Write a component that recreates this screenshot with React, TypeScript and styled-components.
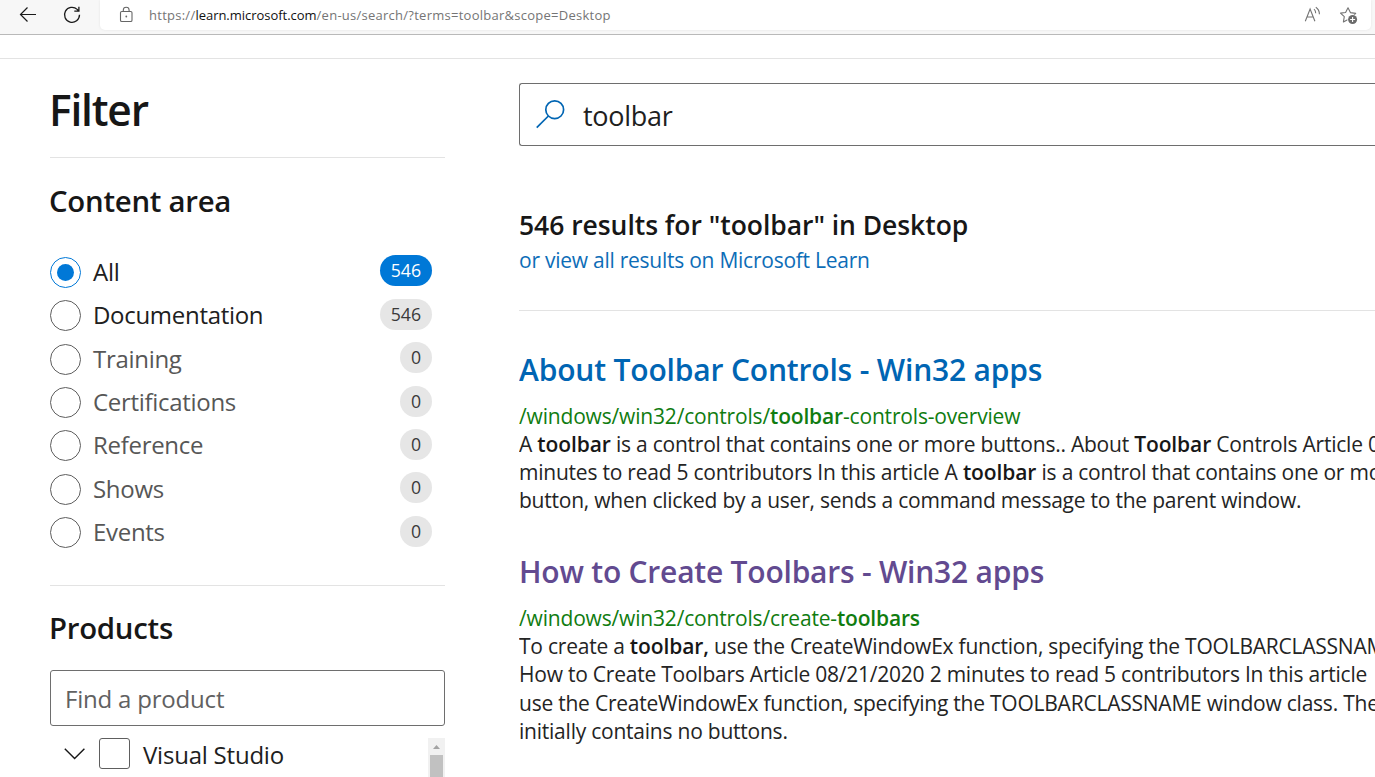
import React from 'react';
import styled, { createGlobalStyle } from 'styled-components';

const GlobalStyle = createGlobalStyle`
  * { box-sizing: border-box; }
  body {
    margin: 0;
    background: #fff;
    color: #171717;
    font-family: "Open Sans", "Noto Sans", sans-serif;
    overflow: hidden;
  }
  h1, h2, h3, p { margin: 0; }
`;

const Page = styled.div`
  width: 100vw;
  height: 100vh;
  display: flex;
  flex-direction: column;
  overflow: hidden;
`;

const BrowserBar = styled.header`
  flex: none;
  display: flex;
  align-items: flex-start;
  height: 35px;
  padding-right: 4px;
  background: #f7f7f7;
  border-bottom: 1px solid #b9b9b9;
`;

const NavButtons = styled.div`
  display: flex;
  width: 100px;
  padding: 4px 0 0 16px;
  gap: 20px;
  color: #1a1a1a;
  svg { display: block; }
`;

const AddressBar = styled.div`
  flex: 1;
  height: 30px;
  display: flex;
  align-items: center;
  padding: 0 12px 0 17px;
  background: #fff;
  border-radius: 0 0 5px 5px;
  box-shadow: 0 0 3px rgba(0, 0, 0, 0.08);
  color: #6b6b6b;
`;

const Url = styled.div`
  flex: 1;
  margin-left: 14px;
  font-size: 13px;
  line-height: 30px;
  letter-spacing: 0.26px;
  white-space: nowrap;
  color: #757575;
`;

const Host = styled.span`
  letter-spacing: -0.03px;
  color: #111;
`;

const AddressActions = styled.div`
  display: flex;
  gap: 16px;
  svg { display: block; }
`;

const SiteStrip = styled.div`
  flex: none;
  height: 24px;
  border-bottom: 1px solid #e3e3e3;
`;

const Content = styled.div`
  flex: 1;
  min-height: 0;
  display: flex;
  gap: 74px;
  padding-left: 50px;
  overflow: hidden;
`;

const Sidebar = styled.aside`
  flex: none;
  width: 395px;
  display: flex;
  flex-direction: column;
`;

const FilterTitle = styled.h1`
  height: 98px;
  margin-left: -1px;
  padding-top: 21px;
  font-size: 42.5px;
  font-weight: 600;
  line-height: 60px;
  letter-spacing: -1.2px;
`;

const Section = styled.section`
  border-top: 1px solid #e3e3e3;
`;

const SectionTitle = styled.h2<{ $raised?: boolean }>`
  height: 63px;
  margin-left: -1px;
  padding-top: ${(p) => (p.$raised ? 22 : 23)}px;
  font-size: 29.4px;
  font-weight: 600;
  line-height: 40px;
  letter-spacing: -0.28px;
`;

const Options = styled.ul`
  list-style: none;
  margin: 0;
  padding: 30px 13px 31px 0;
`;

const Option = styled.li<{ $muted?: boolean }>`
  display: flex;
  align-items: center;
  height: 43.35px;
  color: ${(p) => (p.$muted ? '#575757' : '#202020')};
`;

const Radio = styled.span<{ $checked?: boolean }>`
  flex: none;
  display: grid;
  place-items: center;
  width: 31px;
  height: 31px;
  margin: 0.5px 12px 0 0;
  border: 1px solid ${(p) => (p.$checked ? '#0078d7' : '#5e5e5e')};
  border-radius: 50%;
  &::after {
    content: '';
    width: 17px;
    height: 17px;
    border-radius: 50%;
    background: ${(p) => (p.$checked ? '#0078d7' : 'transparent')};
  }
`;

const OptionLabel = styled.span`
  flex: 1;
  font-size: 24px;
  line-height: 42.6px;
  letter-spacing: -0.3px;
`;

const Badge = styled.span<{ $active?: boolean }>`
  height: 31px;
  margin-bottom: 2.6px;
  padding: 0 11px;
  border-radius: 16px;
  background: ${(p) => (p.$active ? '#0078d7' : '#e6e6e6')};
  color: ${(p) => (p.$active ? '#fff' : '#3a3a3a')};
  font-size: 17.7px;
  line-height: 31.5px;
`;

const ProductInput = styled.div`
  height: 56px;
  margin-top: 21px;
  padding-left: 14px;
  border: 1px solid #6e6e6e;
  border-radius: 3px;
  font-size: 24px;
  line-height: 56px;
  letter-spacing: -0.2px;
  color: #616161;
`;

const ProductList = styled.div`
  display: flex;
  align-items: flex-start;
  height: 39px;
  margin-top: 12px;
  padding-left: 14px;
  overflow: hidden;
`;

const Checkbox = styled.span`
  width: 31px;
  height: 31px;
  margin: 0 13px;
  border: 1px solid #5e5e5e;
  border-radius: 3px;
`;

const ProductName = styled.span`
  flex: 1;
  font-size: 24px;
  line-height: 33px;
  letter-spacing: -0.22px;
  color: #202020;
`;

const Scrollbar = styled.div`
  display: flex;
  flex-direction: column;
  align-items: center;
  width: 17px;
  height: 39px;
  background: #f1f1f1;
  svg { display: block; flex: none; }
`;

const Thumb = styled.div`
  flex: 1;
  width: 13px;
  background: #c1c1c1;
`;

const Main = styled.main`
  flex: 1;
  min-width: 0;
  padding-top: 24px;
  overflow: hidden;
`;

const SearchBox = styled.div`
  display: flex;
  align-items: center;
  height: 63px;
  padding-left: 16px;
  border: 1px solid #6e6e6e;
  border-right: 0;
  border-radius: 3px 0 0 3px;
  svg { margin-bottom: 1px; }
`;

const SearchText = styled.span`
  margin-left: 17px;
  padding-top: 1px;
  font-size: 27px;
  line-height: 61px;
  letter-spacing: -0.28px;
  color: #202020;
`;

const ResultSummary = styled.div`
  height: 165px;
  padding-top: 62px;
  border-bottom: 1px solid #e3e3e3;
`;

const Summary = styled.h2`
  font-size: 26.5px;
  font-weight: 600;
  line-height: 34px;
  letter-spacing: -0.05px;
`;

const AllResultsLink = styled.p`
  font-size: 21px;
  line-height: 36px;
  letter-spacing: -0.25px;
  color: #0d6db7;
`;

const Results = styled.div`
  padding-top: 38px;
`;

const Result = styled.article`
  height: 202px;
  white-space: nowrap;
`;

const ResultTitle = styled.h3<{ $visited?: boolean }>`
  font-size: 30px;
  font-weight: 600;
  line-height: 42px;
  letter-spacing: ${(p) => (p.$visited ? -0.22 : -0.17)}px;
  color: ${(p) => (p.$visited ? '#624a90' : '#0065b3')};
`;

const ResultPath = styled.p`
  margin-top: 11px;
  font-size: 21px;
  line-height: 28.2px;
  letter-spacing: -0.17px;
  color: #107c10;
  b { font-weight: 600; }
`;

const Excerpt = styled.div<{ $leading: number }>`
  line-height: ${(p) => p.$leading}px;
`;

const ResultLine = styled.p`
  font-size: 21px;
  letter-spacing: -0.23px;
  color: #242424;
  b { font-weight: 600; color: #171717; letter-spacing: -0.1px; }
`;

const areas = [
  { label: 'All', count: 546, checked: true },
  { label: 'Documentation', count: 546 },
  { label: 'Training', count: 0 },
  { label: 'Certifications', count: 0 },
  { label: 'Reference', count: 0 },
  { label: 'Shows', count: 0 },
  { label: 'Events', count: 0 },
];

const BackIcon = () => (
  <svg width="24" height="22" viewBox="16 4 24 22" fill="none" stroke="currentColor" strokeWidth="1.2">
    <path d="M36 14.5H20.5M27.5 7.5l-7 7 7 7" />
  </svg>
);

const ReloadIcon = () => (
  <svg width="24" height="22" viewBox="60 4 24 22" fill="none" stroke="currentColor" strokeWidth="1.3">
    <path d="M79.5 14.8a7.5 7.5 0 1 1-2.3-5.4l1.3 1.4M78.9 6.8v4.3h-4.6" />
  </svg>
);

const LockIcon = () => (
  <svg width="18" height="22" viewBox="117 4 18 22" fill="none" stroke="#666" strokeWidth="1.1">
    <rect x="120.5" y="11.5" width="11.5" height="10" rx="1.3" />
    <path d="M123.3 11.5v-1.4a2.9 2.9 0 0 1 5.8 0v1.4" />
    <circle cx="126.3" cy="16.5" r="0.9" fill="#666" stroke="none" />
  </svg>
);

const ReadAloudIcon = () => (
  <svg width="20" height="22" viewBox="1303 4 20 22" fill="none" stroke="#737373" strokeWidth="1.1">
    <path d="M1305.3 21.3l4.8-12.2 4.8 12.2M1306.9 17h6.4M1314 9.1c1.2 1 1.7 2.5 1.7 4.2M1315.8 7.2c2.3 1.5 3.6 4.3 3.6 7" />
  </svg>
);

const FavoriteIcon = () => (
  <svg width="20" height="22" viewBox="1339 4 20 22" fill="none">
    <path
      d="M1348 7.8l2.4 4.8 5.3.8-3.8 3.7.8 4.6-4.7-2.3-4.6 2.5.9-5.2-3.8-3.6 5.1-.6z"
      stroke="#737373"
      strokeWidth="1.1"
      strokeLinejoin="round"
    />
    <circle cx="1352.6" cy="19.5" r="5.3" fill="#fff" />
    <circle cx="1352.6" cy="19.5" r="4.5" fill="#6b6b6b" />
    <path d="M1350.1 19.5h5M1352.6 17v5" stroke="#fff" strokeWidth="1.1" />
  </svg>
);

const SearchIcon = () => (
  <svg width="30" height="30" viewBox="536 99 30 30" fill="none" stroke="#0065b3" strokeWidth="1.7">
    <circle cx="554.7" cy="109.7" r="8.9" />
    <path d="M548.4 116l-11.7 11.7" />
  </svg>
);

const ChevronIcon = () => (
  <svg width="22" height="31" viewBox="64 738 22 31" fill="none" stroke="#171717" strokeWidth="1.4">
    <path d="M64.8 748.8l9.8 9.8 9.8-9.8" />
  </svg>
);

export default function App() {
  return (
    <Page>
      <GlobalStyle />
      <BrowserBar>
        <NavButtons>
          <BackIcon />
          <ReloadIcon />
        </NavButtons>
        <AddressBar>
          <LockIcon />
          <Url>
            https://<Host>learn.microsoft.com</Host>/en-us/search/?terms=toolbar&amp;scope=Desktop
          </Url>
          <AddressActions>
            <ReadAloudIcon />
            <FavoriteIcon />
          </AddressActions>
        </AddressBar>
      </BrowserBar>
      <SiteStrip />
      <Content>
        <Sidebar>
          <FilterTitle>Filter</FilterTitle>
          <Section>
            <SectionTitle>Content area</SectionTitle>
            <Options>
              {areas.map((a) => (
                <Option key={a.label} $muted={a.count === 0}>
                  <Radio $checked={a.checked} />
                  <OptionLabel>{a.label}</OptionLabel>
                  <Badge $active={a.checked}>{a.count}</Badge>
                </Option>
              ))}
            </Options>
          </Section>
          <Section>
            <SectionTitle $raised>Products</SectionTitle>
            <ProductInput>Find a product</ProductInput>
            <ProductList>
              <ChevronIcon />
              <Checkbox />
              <ProductName>Visual Studio</ProductName>
              <Scrollbar>
                <svg width="17" height="17" viewBox="0 0 17 17" fill="#a3a3a3">
                  <path d="M5 11l3.5-4 3.5 4z" />
                </svg>
                <Thumb />
              </Scrollbar>
            </ProductList>
          </Section>
        </Sidebar>
        <Main>
          <SearchBox>
            <SearchIcon />
            <SearchText>toolbar</SearchText>
          </SearchBox>
          <ResultSummary>
            <Summary>546 results for "toolbar" in Desktop</Summary>
            <AllResultsLink>or view all results on Microsoft Learn</AllResultsLink>
          </ResultSummary>
          <Results>
            <Result>
              <ResultTitle>About Toolbar Controls - Win32 apps</ResultTitle>
              <ResultPath>/windows/win32/controls/<b>toolbar</b>-controls-overview</ResultPath>
              <Excerpt $leading={28}>
                <ResultLine>
                  A <b>toolbar</b> is a control that contains one or more buttons.. About <b>Toolbar</b> Controls Article 08
                </ResultLine>
                <ResultLine>
                  minutes to read 5 contributors In this article A <b>toolbar</b> is a control that contains one or more
                </ResultLine>
                <ResultLine>button, when clicked by a user, sends a command message to the parent window.</ResultLine>
              </Excerpt>
            </Result>
            <Result>
              <ResultTitle $visited>How to Create Toolbars - Win32 apps</ResultTitle>
              <ResultPath>/windows/win32/controls/create-<b>toolbars</b></ResultPath>
              <Excerpt $leading={28.25}>
                <ResultLine>
                  To create a <b>toolbar,</b> use the CreateWindowEx function, specifying the TOOLBARCLASSNAME
                </ResultLine>
                <ResultLine>How to Create Toolbars Article 08/21/2020 2 minutes to read 5 contributors In this article</ResultLine>
                <ResultLine>use the CreateWindowEx function, specifying the TOOLBARCLASSNAME window class. The</ResultLine>
                <ResultLine>initially contains no buttons.</ResultLine>
              </Excerpt>
            </Result>
          </Results>
        </Main>
      </Content>
    </Page>
  );
}
